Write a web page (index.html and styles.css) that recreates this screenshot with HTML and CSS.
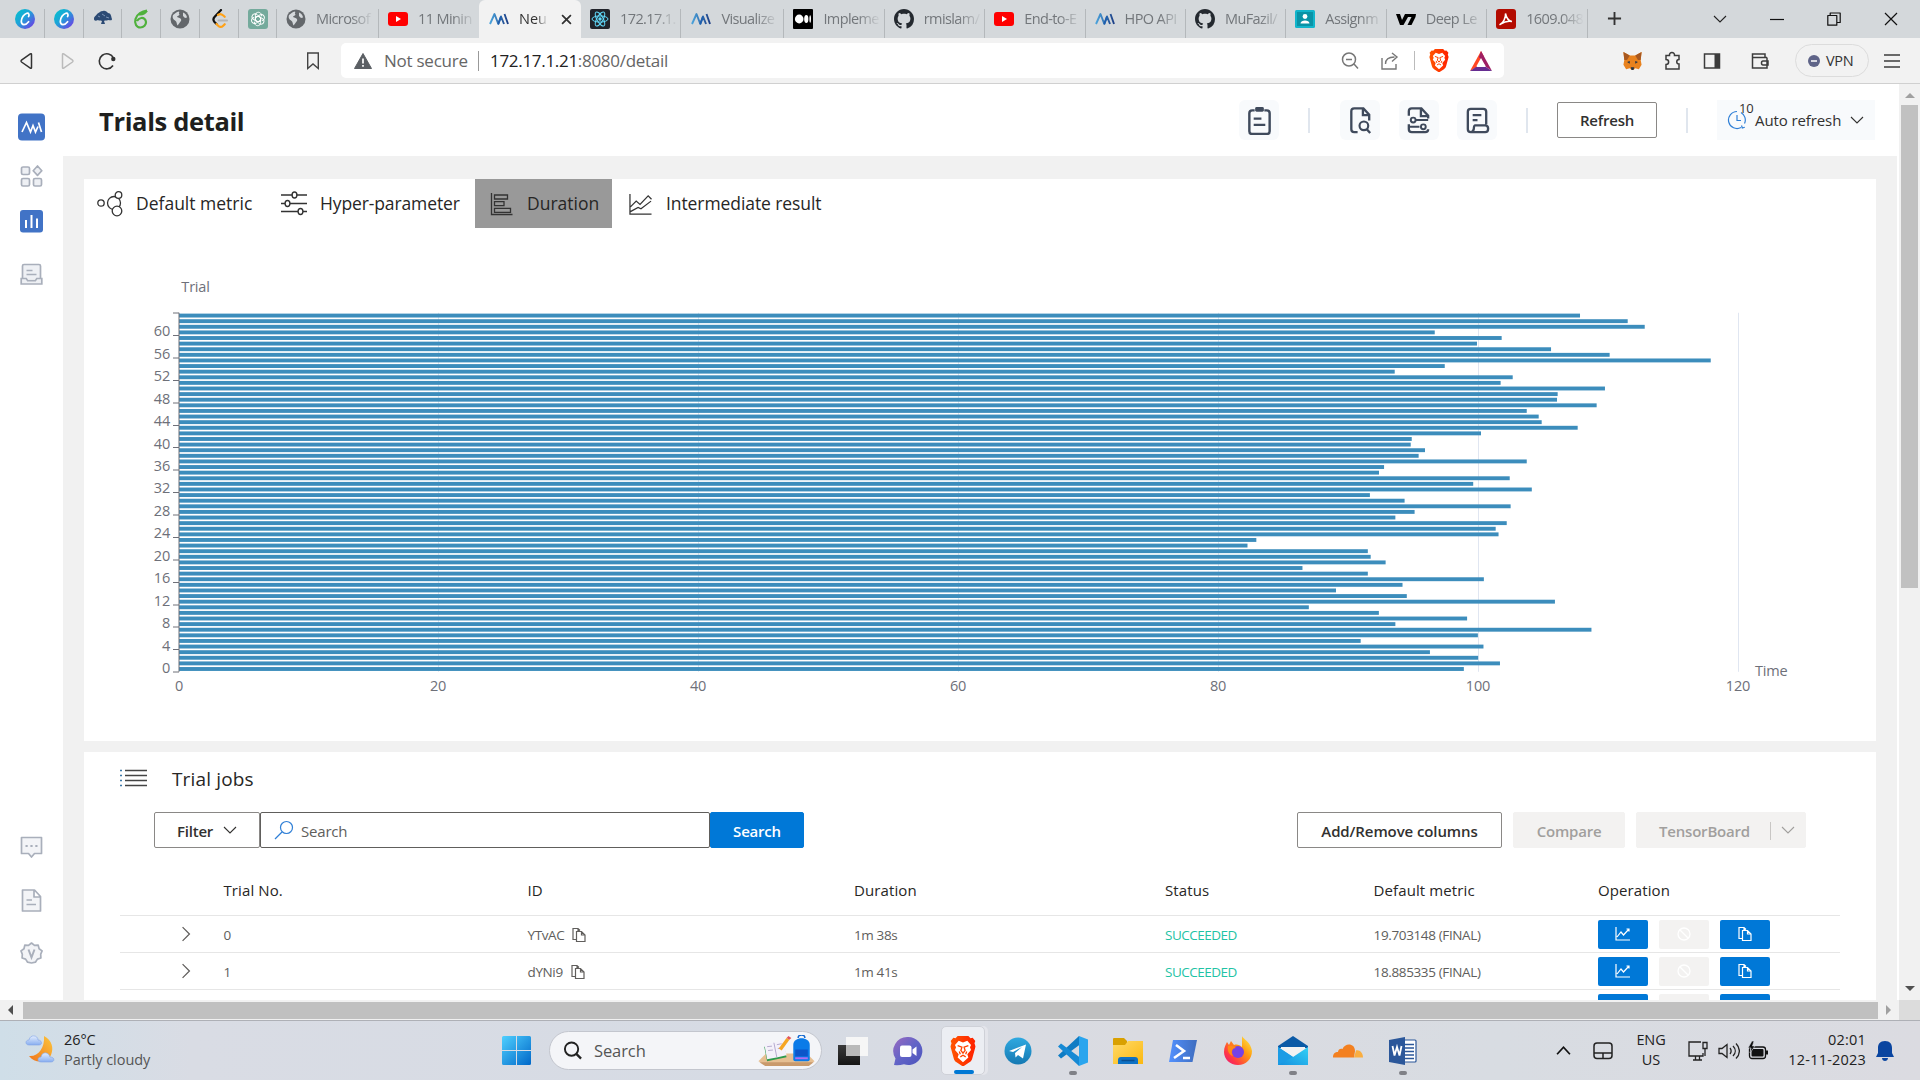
FILE: index.html
```html
<!DOCTYPE html>
<html lang="en">
<head>
<meta charset="utf-8">
<title>Neural Network Intelligence</title>
<link rel="stylesheet" href="styles.css">
</head>
<body>
<svg class="defs" aria-hidden="true">
  <defs>
    <linearGradient id="gCanva" x1="0" y1="0" x2="1" y2="1"><stop offset="0" stop-color="#00c4cc"/><stop offset=".45" stop-color="#1fa3d8"/><stop offset="1" stop-color="#7d2ae8"/></linearGradient>
    <linearGradient id="gNni" x1="0" y1="0" x2="1" y2="0"><stop offset="0" stop-color="#4aa3dc"/><stop offset="1" stop-color="#1d3f86"/></linearGradient>
    <linearGradient id="gWin" x1="0" y1="0" x2="1" y2="1"><stop offset="0" stop-color="#4fd0ff"/><stop offset="1" stop-color="#0067c8"/></linearGradient>
    <linearGradient id="gBrave" x1="0" y1="0" x2="1" y2="0"><stop offset="0" stop-color="#ff5601"/><stop offset="1" stop-color="#ff2000"/></linearGradient>
    <linearGradient id="gChat" x1="0" y1="0" x2="1" y2="1"><stop offset="0" stop-color="#9a6ac0"/><stop offset=".5" stop-color="#6264c7"/><stop offset="1" stop-color="#4b53bc"/></linearGradient>
    <linearGradient id="gTg" x1="0" y1="0" x2="0" y2="1"><stop offset="0" stop-color="#2fa9e0"/><stop offset="1" stop-color="#1579b3"/></linearGradient>
    <linearGradient id="gFold" x1="0" y1="0" x2="1" y2="1"><stop offset="0" stop-color="#ffda69"/><stop offset="1" stop-color="#fbb810"/></linearGradient>
    <linearGradient id="gFire" x1="1" y1="0" x2="0" y2="1"><stop offset="0" stop-color="#fff44f"/><stop offset=".4" stop-color="#ff980e"/><stop offset=".75" stop-color="#ff3647"/><stop offset="1" stop-color="#e31587"/></linearGradient>
    <linearGradient id="gMail" x1="1" y1="0" x2="0" y2="1"><stop offset="0" stop-color="#35d0f5"/><stop offset="1" stop-color="#1490df"/></linearGradient>
    <linearGradient id="gPs" x1="0" y1="0" x2="1" y2="0"><stop offset="0" stop-color="#5391fe"/><stop offset="1" stop-color="#3e6dbf"/></linearGradient>
    <linearGradient id="gMoon" x1="1" y1="0" x2="0" y2="1"><stop offset="0" stop-color="#fcc63c"/><stop offset="1" stop-color="#f0741b"/></linearGradient>
    <linearGradient id="gCloud" x1="0" y1="0" x2="0" y2="1"><stop offset="0" stop-color="#e3edfd"/><stop offset="1" stop-color="#88aef0"/></linearGradient>
    <linearGradient id="gDark" x1="0" y1="0" x2="0" y2="1"><stop offset="0" stop-color="#3a3a3a"/><stop offset="1" stop-color="#151515"/></linearGradient>
    <symbol id="canva" viewBox="0 0 20 20"><circle cx="10" cy="10" r="10" fill="url(#gCanva)"/><path d="M13.600 7.500c1-1.700.2-3.700-1.800-3.200C9 5 6.300 9 6.300 12.300c0 4.500 4.500 4.200 7.300.4" fill="none" stroke="#fff" stroke-width="1.700" stroke-linecap="round"/></symbol>
    <symbol id="tree" viewBox="0 0 20 20"><path d="M1 10c0-3 2-3 3-5 2-1 3-3 6-3 2-1 4 1 5 2 3 0 3 3 4 6 0 2-2 1-4 1-1 1-3 0-4 1l1 3H8l1-3c-2-1-3 0-4-1-2 1-4 1-4-1z" fill="#2b4a74"/><path d="M5 7l2 1M9 5l3 2M13 8l3 1" stroke="#7b93b5" fill="none"/></symbol>
    <symbol id="leafc" viewBox="0 0 20 20"><path d="M16 1.500C11 2 6 5 4.500 10c-1.300 4.500 1 8.500 4.800 8.500 3.500 0 5.900-2.700 5.700-5.500-.2-2.600-2.300-4.300-4.700-4-2 .3-3.500 1.500-4.300 3M8 5.200c2.800.8 5.500-.5 8-3.700" fill="none" stroke="#4fb13c" stroke-width="2.200"/></symbol>
    <symbol id="globe" viewBox="0 0 20 20"><circle cx="10" cy="10" r="9.500" fill="#63676b"/><path d="M3 6c2-1 3-3 6-3.500 1 1-1 2 .5 3 0 1.500-2.500 1-2.500 2.500l2.500 1c1.500.5 2 1.500 1.500 3-1 .8-1.500 2.500-3.500 4.500-1-1.500-.5-4-2.500-5C3.500 10.500 2 9 3 6zm10-2.500c2 .5 4 3 4 5l-2 .5-2-2z" fill="#d4d8db"/></symbol>
    <symbol id="leet" viewBox="0 0 20 20"><path d="M11 1L4.500 8c-1.300 1.500-1.300 3.500 0 5l2 2" fill="none" stroke="#111" stroke-width="2.200" stroke-linecap="round"/><path d="M6.500 15l1.700 1.700c1.500 1.500 3.500 1.500 5 0l1.500-1.500M8 5.800c1.500-1 3.600-.8 5 .5l1.700 1.500" fill="none" stroke="#ffa116" stroke-width="2.200" stroke-linecap="round"/><path d="M8.500 11.500H17" stroke="#b3b3b3" stroke-width="2" stroke-linecap="round"/></symbol>
    <symbol id="gpt" viewBox="0 0 20 20"><rect width="20" height="20" rx="3" fill="#74aa9c"/><g fill="none" stroke="#fff"><path id="petal" d="M7.400 11.300V6.200c0-3 4-4 5.600-1.500.5.900.6 1.700.3 2.600M7.400 8.500l2.600-1.500 2.600 1.500"/><use href="#petal" transform="rotate(60 10 10)"/><use href="#petal" transform="rotate(120 10 10)"/><use href="#petal" transform="rotate(180 10 10)"/><use href="#petal" transform="rotate(240 10 10)"/><use href="#petal" transform="rotate(300 10 10)"/></g></symbol>
    <symbol id="yt" viewBox="0 0 20 20"><rect y="3" width="20" height="14" rx="3" fill="#f00"/><path d="M8 7l5 3-5 3z" fill="#fff"/></symbol>
    <symbol id="nni" viewBox="0 0 20 20"><path d="M1 15L5.500 5l3.800 10L12 7.500l3 7.500M15.500 5l3.500 10" fill="none" stroke="url(#gNni)" stroke-width="1.900" stroke-linejoin="round"/><path d="M9.300 15l2.700-7.500" stroke="#1f5fae" stroke-width="1.900"/></symbol>
    <symbol id="react" viewBox="0 0 20 20"><rect width="20" height="20" rx="2" fill="#20232a"/><g fill="none" stroke="#61dafb"><ellipse cx="10" cy="10" rx="8" ry="3.100"/><ellipse cx="10" cy="10" rx="8" ry="3.100" transform="rotate(60 10 10)"/><ellipse cx="10" cy="10" rx="8" ry="3.100" transform="rotate(120 10 10)"/></g><circle cx="10" cy="10" r="1.700" fill="#61dafb"/></symbol>
    <symbol id="medium" viewBox="0 0 20 20"><rect width="20" height="20" rx="1" /><ellipse cx="6.200" cy="10" rx="4.300" ry="4.400" fill="#fff"/><ellipse cx="13.300" cy="10" rx="2.100" ry="4.100" fill="#fff"/><ellipse cx="17.200" cy="10" rx=".8" ry="3.700" fill="#fff"/></symbol>
    <symbol id="github" viewBox="0 0 16 16"><path fill="#24292f" d="M8 0C3.580 0 0 3.580 0 8c0 3.540 2.290 6.530 5.470 7.590.4.070.55-.17.55-.38 0-.19-.01-.82-.01-1.490-2.010.37-2.530-.49-2.690-.94-.09-.23-.48-.94-.82-1.130-.28-.15-.68-.52-.01-.53.63-.01 1.080.58 1.230.82.72 1.210 1.870.87 2.330.66.07-.52.28-.87.51-1.070-1.780-.2-3.640-.89-3.640-3.950 0-.87.31-1.590.82-2.150-.08-.2-.36-1.020.08-2.120 0 0 .67-.21 2.200.82.640-.18 1.320-.27 2-.27s1.360.09 2 .27c1.530-1.040 2.200-.82 2.200-.82.44 1.100.16 1.920.08 2.120.51.56.82 1.270.82 2.150 0 3.070-1.870 3.750-3.650 3.950.29.25.54.73.54 1.480 0 1.070-.01 1.930-.01 2.200 0 .21.15.46.55.38A8.010 8.010 0 0016 8c0-4.420-3.580-8-8-8z"/></symbol>
    <symbol id="classroom" viewBox="0 0 20 20"><rect y="1" width="20" height="18" rx="1.500" fill="#12b5cb"/><rect x="2" y="3" width="16" height="14" fill="#0a93a6"/><circle cx="10" cy="7.500" r="2.400" fill="#fff"/><path d="M5.500 14.500c0-4 9-4 9 0z" fill="#fff"/></symbol>
    <symbol id="v7" viewBox="0 0 20 20"><path d="M0 5h4l2 6 3-6h11l-.5 3-4 8h-4l4-8h-3.500l-4.500 8H4z"/></symbol>
    <symbol id="pdf" viewBox="0 0 20 20"><rect width="20" height="20" rx="3" fill="#b30b00"/><path d="M4 15.500c3-1 6-7 5.500-11 1 5 3 7.500 6.500 8-4-.7-7.500 0-11 2.500" fill="none" stroke="#fff" stroke-width="1.500" stroke-linecap="round"/></symbol>
    <symbol id="brave" viewBox="0 0 24 28"><path d="M12 0h5l2 2 2-.3 2.500 3-.8 2 1 3-3 11c-.5 2-1.500 3-2.700 3.800L12.800 28h-1.600L6 24.500C4.800 23.700 3.800 22.700 3.300 20.700L.3 9.700l1-3-.8-2 2.500-3 2 .3 2-2z" fill="url(#gBrave)"/><path d="M12 6l4-1.500 3.500 4-1 2 1 2.500-3.500 4 1 3-5 4.500L7 20l1-3-3.500-4 1-2.500-1-2 3.500-4z" fill="#fff"/><path d="M7 9l4 1.500-1 3L12 16l2-2.500-1-3L17 9M8.500 14.500l1 2.500M15.500 14.500l-1 2.500M9.500 19.500L12 18l2.500 1.500" fill="none" stroke="#ff4200" stroke-width="1.200"/></symbol>
    <symbol id="chev" viewBox="0 0 14 14"><path d="M1 4l6 6 6-6" fill="none" stroke="currentColor" stroke-width="1.100"/></symbol>
    <symbol id="copy" viewBox="0 0 16 16"><path d="M5 12.500H2v-11h5l2 2M7 1.500v3M5.500 4.500h5l3.500 3.500v6.500H5.500zM10.500 4.500V8H14" fill="none" stroke="currentColor" stroke-width="1.200"/></symbol>
    <symbol id="line" viewBox="0 0 16 16"><path d="M1 1v13h14M2 11l4-5 2.500 3 5.500-6M11.500 3H14v2.500" fill="none" stroke="currentColor" stroke-width="1.200"/></symbol>
    <symbol id="ban" viewBox="0 0 16 16"><circle cx="8" cy="8" r="6" fill="none" stroke="#fff" stroke-width="1.300"/><path d="M4 4l8 8" stroke="#fff" stroke-width="1.300"/></symbol>
  </defs>
</svg>

<div class="tabstrip">
  <div class="tab t1"><svg class="fav"><use href="#canva"/></svg></div>
  <div class="tab t2"><svg class="fav"><use href="#canva"/></svg></div>
  <div class="tab t3"><svg class="fav"><use href="#tree"/></svg></div>
  <div class="tab t4"><svg class="fav"><use href="#leafc"/></svg></div>
  <div class="tab t5"><svg class="fav"><use href="#globe"/></svg></div>
  <div class="tab t6"><svg class="fav"><use href="#leet"/></svg></div>
  <div class="tab t7"><svg class="fav"><use href="#gpt"/></svg></div>
  <div class="tab wide w1"><svg class="fav"><use href="#globe"/></svg><span>Microsof</span></div>
  <div class="tab wide w2"><svg class="fav"><use href="#yt"/></svg><span>11 Minin</span></div>
  <div class="tab wide active"><svg class="fav"><use href="#nni"/></svg><span>Neu</span><svg class="close" viewBox="0 0 10 10"><path d="M1 1l8 8M9 1L1 9" stroke="#333" stroke-width="1.600"/></svg></div>
  <div class="tab wide"><svg class="fav"><use href="#react"/></svg><span>172.17.1.</span></div>
  <div class="tab wide w3"><svg class="fav"><use href="#nni"/></svg><span>Visualize</span></div>
  <div class="tab wide"><svg class="fav"><use href="#medium"/></svg><span>Impleme</span></div>
  <div class="tab wide"><svg class="fav"><use href="#github"/></svg><span>rmislam/</span></div>
  <div class="tab wide"><svg class="fav"><use href="#yt"/></svg><span>End-to-E</span></div>
  <div class="tab wide"><svg class="fav"><use href="#nni"/></svg><span>HPO API</span></div>
  <div class="tab wide"><svg class="fav"><use href="#github"/></svg><span>MuFazil/</span></div>
  <div class="tab wide"><svg class="fav"><use href="#classroom"/></svg><span>Assignm</span></div>
  <div class="tab wide"><svg class="fav"><use href="#v7"/></svg><span>Deep Le</span></div>
  <div class="tab wide"><svg class="fav"><use href="#pdf"/></svg><span>1609.048</span></div>
  <svg class="newtab" viewBox="0 0 16 16"><path d="M8 1v14M1 8h14" stroke="#333" stroke-width="2"/></svg>
  <div class="wincontrols">
    <svg viewBox="0 0 14 14"><use href="#chev"/></svg>
    <svg viewBox="0 0 14 14"><path d="M0 7.500h14" stroke="#111" stroke-width="1.200"/></svg>
    <svg viewBox="0 0 14 14"><path d="M.8 3.500h9v9.700h-9zM3.200 3.200V1h10v9.500h-3" fill="none" stroke="#111" stroke-width="1.200" stroke-linejoin="round"/></svg>
    <svg viewBox="0 0 14 14"><path d="M1 1l12 12M13 1L1 13" stroke="#111" stroke-width="1.200"/></svg>
  </div>
</div>

<div class="toolbar">
  <svg class="tb" viewBox="0 0 20 20"><path d="M14.500 3.500v13c0 .8-.6 1-1.200.6L4.500 11c-.6-.5-.6-1.300 0-1.800l8.800-6.300c.6-.4 1.200-.2 1.200.6z" fill="none" stroke="#333" stroke-width="1.500"/></svg>
  <svg class="tb" viewBox="0 0 20 20"><path d="M5.500 3.500v13c0 .8.6 1 1.200.6L15.500 11c.6-.5.6-1.300 0-1.800L6.700 2.900c-.6-.4-1.200-.2-1.200.6z" fill="none" stroke="#bbb" stroke-width="1.500"/></svg>
  <svg class="tb" viewBox="0 0 20 20"><path d="M16 14.500A7.500 7.500 0 1 1 16.500 7" fill="none" stroke="#333" stroke-width="1.600"/><circle cx="16.300" cy="8" r="2.200" fill="#333"/></svg>
  <svg class="tb mark" viewBox="0 0 20 20"><path d="M4.700 2h10.600v15.500L10 13l-5.300 4.500z" fill="none" stroke="#444" stroke-width="1.400"/></svg>
  <div class="url">
    <svg class="warn" viewBox="0 0 18 16"><path d="M9 .5l8.500 15H.5z" fill="#5b5f64" stroke="#5b5f64" stroke-linejoin="round"/><path d="M9 5.500v5M9 12v1.800" stroke="#fff" stroke-width="1.700"/></svg>
    <span class="ns">Not secure</span><i class="vbar"></i><span class="addr"><b>172.17.1.21</b>:8080/detail</span>
    <div class="urlicons">
      <svg viewBox="0 0 20 20"><circle cx="9" cy="8.500" r="6.500" fill="none" stroke="#777" stroke-width="1.500"/><path d="M6 8.500h6M14 13l4 4.500" stroke="#777" stroke-width="1.500"/></svg>
      <svg viewBox="0 0 20 20"><path d="M2 7v11h14v-5M5.500 13c0-5 3-7 9-7M12 2l5 4-5 4.500" fill="none" stroke="#777" stroke-width="1.400"/></svg>
      <i class="vbar2"></i>
      <svg class="br"><use href="#brave"/></svg>
      <svg class="bat" viewBox="0 0 22 20"><path d="M11 0l3 5.500-8 11L0 20z" fill="#ff4724"/><path d="M11 0l11 20-6-4-7-10z" fill="#9e1f63"/><path d="M0 20l6-4h10l6 4z" fill="#662d91"/><path d="M11 7l4.500 8h-9z" fill="#fff"/></svg>
    </div>
  </div>
  <svg class="tb fox" viewBox="0 0 22 22"><path d="M1 1l7 4h6l7-4-1 9 1 5-3 5-4-1-2 2h-2l-2-2-4 1-3-5 1-5z" fill="#e8821e"/><path d="M1 1l7 4-3 5H2zM21 1l-7 4 3 5h3z" fill="#a8581f"/><path d="M8 11l-3 1 3 2zM14 11l3 1-3 2zM9 18h4l-1 3h-2z" fill="#233447"/></svg>
  <svg class="tb" viewBox="0 0 20 20"><path d="M4 4.500h3.500c-.6-4 5.500-4 5 0H17v4c-3 0-3 4.500 0 4.500V18H4v-4.500c3.500 0 3.500-5 0-5z" fill="none" stroke="#3c3c3c" stroke-width="1.500"/></svg>
  <svg class="tb" viewBox="0 0 20 20"><path d="M2.500 3h15v14h-15z" fill="none" stroke="#3c3c3c" stroke-width="1.500"/><path d="M12.500 3h5v14h-5z" fill="#3c3c3c"/></svg>
  <svg class="tb wal" viewBox="0 0 20 20"><path d="M17 6.500V17H2.500V3H15v3.500M2.500 6.500H17M18 10h-5c-2 0-2 4 0 4h5z" fill="none" stroke="#3c3c3c" stroke-width="1.500"/></svg>
  <div class="vpn"><svg viewBox="0 0 12 12"><circle cx="6" cy="6" r="6" fill="#5f6488"/><path d="M3 6h6" stroke="#fff" stroke-width="1.500"/></svg>VPN</div>
  <svg class="tb menu" viewBox="0 0 20 20"><path d="M2 4h16M2 10h16M2 16h16" stroke="#3c3c3c" stroke-width="1.400"/></svg>
</div>

<div class="page">
  <nav class="side">
    <svg class="s1" viewBox="0 0 27 27"><rect width="27" height="27" rx="4" fill="#4173c6"/><path d="M4 18.500L8.500 9l4 9.500 2.500-6.500 2.500 6.500L20 13M20.500 9l3 9.500" fill="none" stroke="#fff" stroke-width="1.700"/></svg>
    <svg class="s2" viewBox="0 0 23 23"><g fill="#eef0f4" stroke="#a9afbb" stroke-width="1.700"><rect x="1.500" y="2" width="8" height="7.500" rx="1.500"/><path d="M17.500 1l4.300 4.700-4.300 4.700-4.300-4.700z" stroke-linejoin="round"/><rect x="1.500" y="13.500" width="8" height="7.500" rx="1.500"/><rect x="13.500" y="13.500" width="8" height="7.500" rx="1.500"/></g></svg>
    <svg class="s3" viewBox="0 0 23 23"><rect width="23" height="22.500" rx="3" fill="#4173c6"/><path d="M6 10v8M11.500 5v13M17 8.500V18" stroke="#fff" stroke-width="2"/></svg>
    <svg class="s4" viewBox="0 0 23 23"><g fill="#eef0f4" stroke="#a9afbb" stroke-width="1.700"><path d="M2.500 16V3c0-1 .5-1.500 1.500-1.500h15c1 0 1.500.5 1.500 1.500v13"/><path d="M1.200 15.500h5l1.500 2.200h7.600l1.500-2.200h5V21H1.200z"/><path d="M6.500 7.500h6M6.500 11.500h10"/></g></svg>
    <svg class="s5" viewBox="0 0 23 23"><path d="M1.500 1.500h20v16h-7l-3 3.500-3-3.500h-7z" fill="#f3f4f7" stroke="#a9afbb" stroke-width="1.700" stroke-linejoin="round"/><path d="M5.500 10h2.200M10.400 10h2.200M15.300 10h2.200" stroke="#a9afbb" stroke-width="2"/></svg>
    <svg class="s6" viewBox="0 0 23 23"><path d="M2.500 1h12l6 6.500V22h-18zM14 1.500V8h6" fill="#f3f4f7" stroke="#a9afbb" stroke-width="1.700" stroke-linejoin="round"/><path d="M6.500 11h5.500M6.500 15.500h9.500" stroke="#a9afbb" stroke-width="1.600"/></svg>
    <svg class="s7" viewBox="0 0 23 23"><path d="M11.500 1l3 2.300 3.700-.2.900 3.600 3 2.200-1.400 3.400.2 3.700-3.500 1.100-2 3.100-3.900.800-3.900-.8-2-3.100-3.500-1.100.2-3.700L1 8.900l3-2.200.8-3.600 3.700.2z" fill="#f3f4f7" stroke="#a9afbb" stroke-width="1.700" stroke-linejoin="round"/><path d="M8.500 7.500l3 8 3-8" fill="none" stroke="#a9afbb" stroke-width="2"/></svg>
  </nav>
  <main class="main">
    <header class="head">
      <h1>Trials detail</h1>
      <div class="tools">
        <div class="ibox"><svg viewBox="0 0 30 30"><path d="M10 4.500H7.500c-2 0-3 1-3 3V26c0 2 1 3 3 3h15c2 0 3-1 3-3V7.500c0-2-1-3-3-3H20" fill="none" stroke="#3f4a5c" stroke-width="2.500"/><rect x="10.500" y="1" width="9" height="5" rx="1.500" fill="#3f4a5c"/><path d="M9 13h8M9 19.500h12" stroke="#3f4a5c" stroke-width="2.300"/></svg></div>
        <i class="hsep a"></i>
        <div class="ibox b"><svg viewBox="0 0 30 30"><path d="M12 27H8.500c-2 0-3-1-3-3V5.500c0-2 1-3 3-3H18l6 6.500v6M17.500 3v6.500H24" fill="none" stroke="#3f4a5c" stroke-width="2.400"/><circle cx="18.500" cy="20.500" r="4.500" fill="none" stroke="#3f4a5c" stroke-width="2.200"/><path d="M21.500 24l3.500 4" stroke="#3f4a5c" stroke-width="2.400"/></svg></div>
        <div class="ibox c"><svg viewBox="0 0 30 30"><path d="M5 10V5.500c0-2 1-3 3-3h10L25 10v3M17.500 3v7.500H25M5 19v5c0 2 1 3 3 3h14c2 0 3-1 3-3" fill="none" stroke="#3f4a5c" stroke-width="2.400"/><path d="M12 14.500h13M5 21.500h11" stroke="#3f4a5c" stroke-width="2.200"/><circle cx="9.500" cy="14.500" r="2.500" fill="none" stroke="#3f4a5c" stroke-width="2"/><circle cx="20" cy="21.500" r="2.500" fill="none" stroke="#3f4a5c" stroke-width="2"/></svg></div>
        <div class="ibox d"><svg viewBox="0 0 30 30"><path d="M24 19V6c0-2-1-3-3-3H8C6 3 5 4 5 6v18c0 2 1 3 3 3h15c4 0 4-7 0-7H12.500c-1.500 0-1 2.500-1.500 4.500-.5 1.500-1.500 2.500-3 2.500" fill="none" stroke="#3f4a5c" stroke-width="2.400"/><path d="M10 9.500h9M10 14.500h5" stroke="#3f4a5c" stroke-width="2.300"/></svg></div>
        <i class="hsep e"></i>
        <button class="btn refresh">Refresh</button>
        <i class="hsep f"></i>
        <div class="auto"><svg class="clock" viewBox="0 0 20 20"><path d="M10 1.500a8.500 8.500 0 1 0 4 16M14 2.500a8.500 8.500 0 0 1 3.500 11M10 5v5.500h4M14.500 15.500l.8 2.500 2.500-.8" fill="none" stroke="#2f7fd6" stroke-width="1.200"/></svg><sup>10</sup><span>Auto refresh</span><svg class="cv"><use href="#chev"/></svg></div>
      </div>
    </header>
    <section class="card chartcard">
      <div class="pivot">
        <div class="pv p1"><svg viewBox="0 0 26 26"><g fill="none" stroke="#333" stroke-width="1.300"><circle cx="4" cy="12" r="3.200"/><circle cx="17" cy="12" r="6.500"/><circle cx="21.500" cy="4" r="3.300" fill="#fff"/><circle cx="20" cy="20" r="4.800" fill="#fff"/></g></svg><span>Default metric</span></div>
        <div class="pv p2"><svg viewBox="0 0 26 26"><g fill="none" stroke="#333" stroke-width="1.400"><path d="M0 4h11M16 4h10M0 12.500h4M9 12.500h17M0 20.500h17M22 20.500h4"/><ellipse cx="13.500" cy="4" rx="2.400" ry="3"/><ellipse cx="6.500" cy="12.500" rx="2.400" ry="3"/><ellipse cx="19.500" cy="20.500" rx="2.400" ry="3"/></g></svg><span>Hyper-parameter</span></div>
        <div class="pv p3"><svg viewBox="0 0 22 24"><path d="M1 1v21.500h21M4 3h13v4H4zM4 9.700h9.500v4H4zM4 16.300h16v4H4z" fill="none" stroke="#333" stroke-width="1.300"/></svg><span>Duration</span></div>
        <div class="pv p4"><svg viewBox="0 0 24 24"><path d="M1 1.500v21h22.500M1.500 15l6-6 4 3.500L20 3.500l3.500 3.500M1.500 20l8-4.500 3 1.500L23 9" fill="none" stroke="#333" stroke-width="1.300"/></svg><span>Intermediate result</span></div>
      </div>
      <svg class="chart" id="chart" viewBox="84 228 1792 513"></svg>
    </section>
    <section class="card jobs">
      <div class="jobtitle"><svg viewBox="0 0 27 18"><path d="M5 1.500h22M5 6.500h22M5 11.500h22M5 16.500h22" stroke="#444" stroke-width="1.500"/><path d="M0 1.500h2M0 6.500h2M0 11.500h2M0 16.500h2" stroke="#3c78a8" stroke-width="1.500"/></svg><h2>Trial jobs</h2></div>
      <div class="actions">
        <button class="btn filter">Filter<svg><use href="#chev"/></svg></button>
        <div class="searchbox"><svg viewBox="0 0 20 20"><circle cx="12.500" cy="7.500" r="6" fill="none" stroke="#2f7fd6" stroke-width="1.200"/><path d="M8 12L1 19" stroke="#2f7fd6" stroke-width="1.200"/></svg>Search</div>
        <button class="btn primary">Search</button>
        <button class="btn addrem">Add/Remove columns</button>
        <button class="btn dis cmp">Compare</button>
        <button class="btn dis tens"><span>TensorBoard</span><i></i><svg><use href="#chev"/></svg></button>
      </div>
      <div class="row hd"><span></span><span>Trial No.</span><span>ID</span><span>Duration</span><span>Status</span><span>Default metric</span><span>Operation</span></div>
      <div class="row"><svg class="exp"><use href="#chev"/></svg><span>0</span><span class="id">YTvAC<svg><use href="#copy"/></svg></span><span>1m 38s</span><span class="ok">SUCCEEDED</span><span>19.703148 (FINAL)</span><div class="ops"><b><svg><use href="#line"/></svg></b><b class="off"><svg><use href="#ban"/></svg></b><b><svg><use href="#copy"/></svg></b></div></div>
      <div class="row"><svg class="exp"><use href="#chev"/></svg><span>1</span><span class="id">dYNi9<svg><use href="#copy"/></svg></span><span>1m 41s</span><span class="ok">SUCCEEDED</span><span>18.885335 (FINAL)</span><div class="ops"><b><svg><use href="#line"/></svg></b><b class="off"><svg><use href="#ban"/></svg></b><b><svg><use href="#copy"/></svg></b></div></div>
      <div class="row"><span></span><span></span><span></span><span></span><span></span><span></span><div class="ops"><b></b><b class="off"></b><b></b></div></div>
    </section>
  </main>
  <div class="vscroll"><i class="up"></i><div class="vthumb"></div><i class="down"></i></div>
</div>
<div class="hscroll"><i class="left"></i><div class="hthumb"></div><i class="right"></i><div class="corner"></div></div>

<footer class="taskbar">
  <svg class="weather" viewBox="0 0 30 30"><path d="M19 2c8 4 10 12 7 19-4 8-16 9-22 1 9 1 16-8 15-20z" fill="url(#gMoon)"/><path d="M4 11c-4 0-4-5 0-5 1-6 9-5 9 0 4 0 5 5 1 5z" fill="url(#gCloud)" stroke="#7fa3e6" stroke-width=".6"/><path d="M16 28c-4 0-4-5 0-5 1-6 8-5 9 0 5 0 5 5 1 5z" fill="url(#gCloud)" stroke="#7fa3e6" stroke-width=".6"/></svg>
  <div class="wtext"><span>26°C</span><span class="dim">Partly cloudy</span></div>
  <svg class="start" viewBox="0 0 29 29"><path d="M0 1.500Q0 0 1.500 0H14v14H0zM15 0h12.500Q29 0 29 1.500V14H15zM0 15h14v14H1.500Q0 29 0 27.500zM15 15h14v12.500Q29 29 27.500 29H15z" fill="url(#gWin)"/></svg>
  <div class="tsearch"><svg viewBox="0 0 20 20"><circle cx="9" cy="8.500" r="7" fill="none" stroke="#222" stroke-width="2"/><path d="M14 13.500l5 5" stroke="#222" stroke-width="2.400"/></svg><span>Search</span>
    <svg class="illus" viewBox="0 0 58 32"><path d="M0 27l8-8h42l8 8-6 4H7z" fill="#e6bf92"/><path d="M1 28h56l-5 4H7z" fill="#c99a6c"/><path d="M6 12l20-3 3 14-20 4z" fill="#2e9a4c"/><path d="M6 9l10-1 10-3 3 16-9 2-11 2z" fill="#f4f1fa"/><path d="M16 8l3 15M9 12l5-.5M10 16l5-.5M19 10l5-1M20 14l5-1" stroke="#b4a8cc"/><path d="M21 14l8-11 3 2-8 11z" fill="#f6a623"/><path d="M29 3l2-2 3 2-2 2z" fill="#e3555c"/><path d="M36 10c0-9 17-9 17 0v15q0 2-2 2H38q-2 0-2-2z" fill="#0b7be8"/><path d="M41 3c0-4 7-4 7 0" fill="none" stroke="#1268d0" stroke-width="1.500"/><path d="M38 15h13v7H38z" fill="#0c55c9"/><path d="M38 23h13v2H38z" fill="#b06cf0"/></svg>
  </div>
  <div class="apps">
    <div><svg viewBox="0 0 30 30"><path d="M0 9h22v20H0z" fill="url(#gDark)"/><path d="M8 1h22v19H8z" fill="#f6f6f6"/><path d="M8 9h14v11H8z" fill="#b9b9b9"/></svg></div>
    <div><svg viewBox="0 0 30 30"><path d="M15 1a14 14 0 1 1-4 27.300Q6 29.500 1 29l1.500-6.500A14 14 0 0 1 15 1z" fill="url(#gChat)"/><rect x="7" y="9.500" width="11.500" height="11.500" rx="2" fill="#fff"/><path d="M19.500 13.500l4-3v9.500l-4-3z" fill="#fff"/></svg></div>
    <div class="tile"><svg viewBox="0 0 24 28"><use href="#brave"/></svg><i class="on"></i></div>
    <div><svg viewBox="0 0 30 30"><circle cx="15" cy="15" r="13.500" fill="url(#gTg)"/><path d="M6 15l17-6.500-3 14-5-3.500-2.500 2.500-.5-4.500 7-6-9 5z" fill="#fff"/></svg></div>
    <div><svg viewBox="0 0 30 30"><path d="M21 0L0 19.500l3 3L22 8.500z" fill="#0f7cc4"/><path d="M21 30L0 10.500l3-3L22 21.500z" fill="#1689d4"/><path d="M21 0l9 3.500v23L21 30z" fill="#2aa5ee"/></svg><i></i></div>
    <div><svg viewBox="0 0 30 30"><path d="M0 3q0-1 1-1h10l3 3v6H0z" fill="#d9a000"/><path d="M0 9h12l3-4h15v23H0z" fill="url(#gFold)"/><path d="M5 28v-4q0-3 3-3h14q3 0 3 3v4z" fill="#0f72c4"/><path d="M8.500 24.500h13" stroke="#0a4f90" stroke-width="1.500"/></svg></div>
    <div><svg viewBox="0 0 30 30"><path d="M5 4h24l-4.500 22H1z" fill="url(#gPs)"/><path d="M8 9l8 6-10 7M15 22h7" fill="none" stroke="#fff" stroke-width="2.600"/></svg></div>
    <div><svg viewBox="0 0 30 30"><path d="M19 0c1 3 9 6 10 15 0 8-6 14-14 14S1 23 1 16c0-5 2-8 3-10l2 3 2-4 3 4c3-1 6 0 8 2z" fill="url(#gFire)"/><circle cx="15" cy="16" r="6" fill="#7542e5"/><path d="M5 10c3-1 5 0 8 2-5 0-5 5-3 8-4-1-6-6-5-10z" fill="#ff8a16"/></svg></div>
    <div><svg viewBox="0 0 30 30"><path d="M0 10L15 0l15 10v2H0z" fill="#0b5aa6"/><path d="M3 11h24v10H3z" fill="#f2f2f2"/><path d="M0 11l15 10L30 11v18H0z" fill="url(#gMail)"/><path d="M0 11l15 10-15 8z" fill="#1b9ce5"/></svg><i></i></div>
    <div><svg viewBox="0 0 30 30"><path d="M0 21.500c0-4 2-5.500 5-5.500 0-3 3-4 4.500-3C12 6.500 22 7 22 15l-1 6.500z" fill="#f38020"/><path d="M21 21.500l2-7c4-1 7 3 7 7z" fill="#faae40"/></svg></div>
    <div><svg viewBox="0 0 30 30"><path d="M14 4h13q1 0 1 1v20q0 1-1 1H14z" fill="#fff" stroke="#2b579a" stroke-width="1.200"/><path d="M17 8.500h9M17 12h9M17 15.500h9M17 19h9M17 22.500h9" stroke="#2b579a" stroke-width="1.500"/><path d="M1 4l16-3v28L1 26z" fill="#2b579a"/><path d="M4.500 10l2 9.500L9 11l2.500 8.500 2-9.500" fill="none" stroke="#fff" stroke-width="1.800"/></svg><i></i></div>
  </div>
  <div class="tray">
    <svg class="y1" viewBox="0 0 14 14"><path d="M1 10.500L7 4l6 6.500" fill="none" stroke="#111" stroke-width="1.600"/></svg>
    <svg class="y2" viewBox="0 0 20 18"><rect x="1" y="1" width="18" height="15.500" rx="3" fill="none" stroke="#222" stroke-width="1.500"/><path d="M1 11h18M10 11v5" stroke="#222" stroke-width="1.500"/></svg>
    <div class="lang"><span>ENG</span><span>US</span></div>
    <svg class="y3" viewBox="0 0 20 20"><path d="M13 1H1v14h14v-3M5 19h9M7.500 15v4M11.500 15v4M15 1.500h4v6h-4zM17 8v7" fill="none" stroke="#222" stroke-width="1.300"/></svg>
    <svg class="y4" viewBox="0 0 22 20"><path d="M1 7.500h3l5-4v13l-5-4H1zM12 7c1.500 2 1.500 4 0 6M15 5c3 3 3 7 0 10M18 2.500c4.500 4.500 4.500 10.500 0 15" fill="none" stroke="#222" stroke-width="1.300"/></svg>
    <svg class="y5" viewBox="0 0 20 20"><rect x="1.500" y="6" width="16" height="11.500" rx="2.500" fill="none" stroke="#111" stroke-width="1.300"/><rect x="3.500" y="8" width="12" height="7.500" rx="1" fill="#111"/><path d="M19 9.500v4" stroke="#111" stroke-width="2"/><path d="M4 0L0 7h3L2 12l5-7H4.500L6 0z" fill="#111" stroke="#d9dbe2" stroke-width=".6"/></svg>
    <div class="time"><span>02:01</span><span>12-11-2023</span></div>
    <svg class="y6" viewBox="0 0 18 20"><path d="M9 0c5 0 7 3 7 7v5l2 4H0l2-4V7c0-4 2-7 7-7zM6 17h6c0 4-6 4-6 0z" fill="#0a45a0"/></svg>
  </div>
</footer>
<script src="chart.js"></script>
</body>
</html>
```
FILE: styles.css
```css
* { box-sizing: border-box; }
html, body { margin: 0; width: 1920px; height: 1080px; overflow: hidden; }
body { font-family: "Open Sans", "Noto Sans", sans-serif; font-size: 15px; color: #323130; background: #fff; display: flex; flex-direction: column; letter-spacing: -0.3px; }
svg { display: block; flex: none; }
i { display: block; flex: none; }
span { white-space: nowrap; }
.defs { position: absolute; width: 0; height: 0; }

/* browser tabs */
.tabstrip { height: 38px; flex: none; background: #d4d8db; display: flex; }
.tab { height: 29px; margin-top: 9px; border-right: 1px solid #b4b8bb; flex: none; display: flex; align-items: flex-start; color: #73777b; overflow: hidden; }
.fav { width: 20px; height: 20px; }
.t1 { width: 45px; padding-left: 15px; }
.t2 { width: 39px; padding-left: 9px; }
.t3 { width: 38px; padding-left: 9px; }
.t4 { width: 39px; padding-left: 9px; }
.t5 { width: 39px; padding-left: 9px; }
.t6 { width: 39px; padding-left: 10px; }
.t7 { width: 38px; padding-left: 9px; }
.wide { width: 100.4px; padding-left: 9px; }
.wide span { font-size: 14.500px; line-height: 20px; margin-left: 10px; width: 58px; overflow: hidden; letter-spacing: -0.6px; -webkit-mask-image: linear-gradient(90deg, #000 60%, transparent); mask-image: linear-gradient(90deg, #000 60%, transparent); }
.w1 { width: 102px; }
.w2 { width: 100px; border: 0; }
.w3 { width: 103px; padding-left: 10px; }
.wide.active { width: 102px; height: 38px; margin: 0; padding: 9px 0 0 10px; border: 0; border-radius: 6px 6px 0 0; background: #f2f2f2; color: #333; }
.wide.active span { width: 29px; letter-spacing: 0; }
.close { width: 11px; height: 11px; margin: 5px 0 0 13px; }
.newtab { width: 15px; height: 15px; margin: 11px 0 0 19px; }
.wincontrols { margin: 12px 0 0 91px; display: flex; gap: 43px; color: #222; }
.wincontrols svg { width: 14px; height: 14px; }

/* address bar */
.toolbar { height: 46px; flex: none; background: #f2f2f2; border-bottom: 1px solid #d0d0d0; display: flex; align-items: center; padding-left: 17px; }
.tb { width: 20px; height: 20px; margin-right: 20px; flex: none; }
.mark { margin: 0 18px 0 166px; }
.url { width: 1163px; height: 35px; background: #fff; border-radius: 5px; display: flex; align-items: center; padding-left: 13px; flex: none; font-size: 17px; color: #666; }
.warn { width: 18px; height: 16px; margin-right: 12px; }
.ns { width: 94px; letter-spacing: -0.25px; }
.vbar { width: 1px; height: 20px; background: #999; margin-right: 11px; }
.addr { letter-spacing: -0.3px; }
.addr b { font-weight: 400; color: #222; }
.urlicons { margin-left: auto; display: flex; align-items: center; padding-right: 12px; }
.urlicons svg { width: 20px; height: 20px; margin-right: 20px; }
.vbar2 { width: 1px; height: 19px; background: #bbb; margin: 0 14px 0 -6px; }
.urlicons .br { width: 20px; height: 23px; margin-right: 21px; }
.urlicons .bat { width: 22px; height: 20px; margin: 0; }
.fox { margin-left: 118px; width: 21px; margin-right: 19px; }
.wal { margin-left: 8px; margin-right: 25px; }
.vpn { width: 74px; height: 33px; border: 1px solid #dcdcdc; border-radius: 17px; display: flex; align-items: center; padding-left: 12px; gap: 6px; color: #333; font-size: 14.500px; flex: none; }
.vpn svg { width: 12px; height: 12px; }
.menu { margin: 0 0 0 13px; }

/* page frame */
.page { height: 916px; flex: none; display: flex; overflow: hidden; }
.side { width: 63px; flex: none; padding: 29px 0 0 18px; }
.side svg { width: 23px; height: 23px; margin-left: 2px; }
.side .s1 { width: 27px; height: 28px; margin: 0 0 24px; }
.side .s2 { margin-bottom: 22px; }
.side .s3 { margin-bottom: 30px; }
.side .s4 { margin-bottom: 550px; }
.side .s5 { margin-bottom: 30px; }
.side .s6 { margin-bottom: 30px; }
.main { width: 1834px; flex: none; background: #f1f1f1; overflow: hidden; }
.head { height: 72px; background: #fff; display: flex; align-items: center; justify-content: space-between; padding: 0 22px 0 36px; }
h1 { margin: 1px 0 0; font-size: 25.500px; font-weight: 700; letter-spacing: -0.35px; color: #201f1e; }
.tools { display: flex; align-items: center; }
.ibox { width: 40px; height: 40px; border-radius: 6px; background: #f8fafc; display: flex; align-items: center; justify-content: center; }
.ibox svg { width: 29px; height: 29px; }
.hsep { width: 2px; height: 25px; background: #e0e6ee; }
.a { margin: 0 30px 0 29px; }
.c, .d { margin-left: 18.500px; }
.e { margin: 0 29px; }
.f { margin: 0 29px; }
.btn { font-family: inherit; font-size: 15px; font-weight: 600; letter-spacing: -0.2px; color: #323130; background: #fff; border: 1px solid #8a8886; border-radius: 2px; height: 36px; display: flex; align-items: center; justify-content: center; padding: 1px 0 0; white-space: nowrap; flex: none; }
.refresh { width: 100px; padding: 0; }
.auto { width: 158px; height: 40px; background: #f8fafc; display: flex; align-items: center; padding-left: 10px; }
.clock { width: 20px; height: 20px; }
.auto sup { font-size: 13px; line-height: 13px; width: 14px; margin: -24px -6px 0 -8px; letter-spacing: -0.2px; }
.auto sup + span { margin-left: 8px; width: 95px; letter-spacing: -0.1px; }
.cv { width: 14px; height: 14px; }

.card { width: 1792px; margin-left: 21px; background: #fff; }
.chartcard { margin-top: 23px; height: 562px; }
.pivot { display: flex; height: 49px; }
.pv { display: flex; align-items: center; font-size: 17.500px; letter-spacing: 0; font-weight: 500; color: #272625; }
.pv span { padding-bottom: 2px; }
.pv svg { height: 26px; width: 26px; }
.p1 { width: 184px; padding-left: 13px; gap: 13px; }
.p2 { width: 207px; padding-left: 13px; gap: 13px; letter-spacing: -0.12px; }
.p3 { width: 137px; padding-left: 15px; gap: 14px; background: #999; }
.pv.p3 svg, .pv.p4 svg { width: 23px; height: 24px; }
.p4 { padding-left: 17px; gap: 14px; letter-spacing: -0.08px; }
.chart { width: 1792px; height: 513px; }
.chart text { font-size: 14.500px; fill: #6e7079; letter-spacing: -0.2px; }
.bar { fill: #3c8dbc; }
.grid { stroke: #e0e6f1; }
.axis { stroke: #6e7079; }

/* job table */
.jobs { margin-top: 11px; height: 260px; padding: 0 36px; }
.jobtitle { display: flex; align-items: center; height: 54px; gap: 25px; }
.jobtitle svg { width: 27px; height: 18px; margin-top: -2px; }
h2 { margin: 0; font-size: 19px; font-weight: 500; letter-spacing: 0.15px; color: #272625; }
.actions { display: flex; padding: 6px 34px 0; height: 66px; }
.filter { width: 106px; gap: 10px; }
.filter svg, .tens svg { width: 14px; height: 14px; margin-top: -2px; }
.searchbox { width: 450px; height: 36px; border: 1px solid #605e5c; border-radius: 2px; display: flex; align-items: center; padding: 1px 0 0 13px; gap: 7px; color: #605e5c; letter-spacing: -0.2px; }
.searchbox svg { width: 20px; height: 20px; margin-top: -2px; }
.primary { width: 94px; background: #0078d7; color: #fff; border-color: #0078d7; }
.addrem { width: 205px; margin-left: auto; letter-spacing: -0.1px; }
.dis { background: #f3f2f1; border-color: #f3f2f1; color: #a19f9d; }
.cmp { width: 112px; margin: 0 11px; }
.tens { width: 170px; justify-content: flex-start; padding-left: 22px; }
.tens span { width: 111px; text-align: left; }
.tens i { width: 1px; height: 18px; background: #c8c6c4; margin-right: 10px; }
.row { display: grid; grid-template-columns: 103.500px 304px 326.500px 311px 208.600px 224.400px 242px; height: 37px; align-items: center; border-bottom: 1px solid #e6e6e6; font-size: 13.500px; letter-spacing: -0.37px; color: #605e5c; }
.row > span { padding-top: 1px; }
.row.hd { height: 44px; padding-bottom: 8px; font-size: 15px; font-weight: 500; color: #272625; letter-spacing: 0.1px; }
.exp { width: 16px; height: 16px; margin-left: 57.500px; transform: rotate(-90deg); }
.id { display: flex; align-items: center; gap: 7px; }
.id svg { width: 16px; height: 16px; }
.row .ok { color: #1fc3a5; letter-spacing: -0.5px; }
.ops { display: flex; gap: 11px; padding-left: 0.500px; }
.ops b { width: 50px; height: 29px; border-radius: 2px; background: #0078d7; color: #fff; display: flex; align-items: center; justify-content: center; }
.ops svg { width: 16px; height: 16px; }
.ops .off { background: #f3f2f1; }

/* scroll bars */
.vscroll { width: 21px; margin-left: 2px; background: #f1f1f1; flex: none; display: flex; flex-direction: column; align-items: center; }
.up { border: 5px solid transparent; border-top: 0; border-bottom: 5px solid #a0a0a0; margin: 9px 0 7px; }
.vthumb { width: 17px; height: 483px; background: #c1c1c1; }
.down { border: 5px solid transparent; border-bottom: 0; border-top: 5px solid #505050; margin-top: auto; margin-bottom: 9px; }
.hscroll { height: 20px; flex: none; background: #f1f1f1; display: flex; align-items: center; }
.left { border: 5px solid transparent; border-left: 0; border-right: 5px solid #505050; margin: 0 10px 0 8px; }
.hthumb { width: 1855px; height: 17px; background: #c0c0c0; margin-top: 1px; }
.right { border: 5px solid transparent; border-right: 0; border-left: 5px solid #a0a0a0; margin: 0 8px 0 8px; }
.corner { width: 21px; height: 20px; background: #dcdcdc; }

/* taskbar */
.taskbar { height: 60px; flex: none; border-top: 1px solid #aeb0b6; background: linear-gradient(90deg, #cfdee8 0, #d9dce4 10%, #d6dbe4 40%, #dadbe1 60%, #d8dce2 78%, #dbdbe1 100%); display: flex; align-items: center; font-size: 14.500px; letter-spacing: -0.1px; color: #222; }
.weather { width: 30px; height: 30px; margin: -4px 0 0 25px; }
.wtext { display: flex; flex-direction: column; line-height: 20px; margin: -2px 0 0 9px; width: 438px; }
.dim { color: #555; letter-spacing: -0.05px; }
.start { width: 29px; height: 29px; margin-right: 18px; }
.tsearch { width: 273px; height: 39px; border: 1px solid #c3c6ce; border-radius: 20px; background: #f4f5f8; display: flex; align-items: center; padding-left: 13px; font-size: 16.500px; color: #555; flex: none; }
.tsearch svg { width: 19px; height: 19px; margin-right: 12px; }
.tsearch .illus { width: 57px; height: 31px; margin: 0 6px 0 auto; }
.apps { display: flex; margin-left: 3px; }
.apps div { width: 55px; height: 59px; display: flex; align-items: center; justify-content: center; position: relative; }
.apps svg { width: 30px; height: 30px; }
.apps .tile { width: 44px; height: 49px; margin: 5px 5.500px; background: #eceef3; border: 1px solid #cfd1d8; border-radius: 5px; box-shadow: 3px 0 0 #e4e5eb; }
.apps i { position: absolute; bottom: 5px; left: 24px; width: 8px; height: 4px; border-radius: 2px; background: #808187; }
.apps .on { left: 12px; bottom: 0; width: 20px; background: #0078d4; }
.tray { margin-left: auto; display: flex; align-items: center; padding-right: 26px; }
.y1 { width: 15px; height: 15px; margin-right: 22px; }
.y2 { width: 20px; height: 18px; margin-right: 23px; }
.lang, .time { display: flex; flex-direction: column; line-height: 20px; margin-top: -1px; }
.lang { width: 30px; align-items: center; margin-right: 22px; }
.y3 { width: 20px; height: 20px; margin-right: 10px; }
.y4 { width: 22px; height: 20px; margin-right: 8px; }
.y5 { width: 20px; height: 20px; }
.time { width: 98px; align-items: flex-end; margin-right: 10px; letter-spacing: 0.2px; }
.y6 { width: 18px; height: 20px; }
```
FILE: chart.js
```js
// Trial durations in seconds, trial 0 first.
const durations = [
  98.88, 101.66, 99.98, 96.27, 100.39, 90.94, 99.96, 108.70, 93.61, 99.13, 92.34, 86.95, 105.89, 94.49, 89.04, 94.16,
  100.42, 91.49, 86.46, 92.86, 91.71, 91.49, 82.23, 82.91, 101.55, 101.33, 102.18, 93.61, 95.09, 102.48, 94.32, 91.65,
  104.11, 99.60, 102.41, 92.35, 92.74, 103.72, 95.40, 95.89, 94.79, 94.87, 100.20, 107.64, 104.87, 104.64, 103.72, 109.10,
  106.05, 106.10, 109.74, 101.71, 102.64, 93.56, 97.41, 117.88, 110.10, 105.59, 99.89, 101.79, 96.64, 112.80, 111.49, 107.82
];
const x0 = 179, xScale = 12.994, yBase = 671.8, band = 5.61;
const yTop = yBase - band * durations.length;
const parts = [];
const text = (x, y, anchor, s) => parts.push(`<text x="${x}" y="${y}" text-anchor="${anchor}">${s}</text>`);
const line = (cls, a, b, c, d) => parts.push(`<line class="${cls}" x1="${a}" y1="${b}" x2="${c}" y2="${d}"/>`);

for (let v = 0; v <= 120; v += 20) {
  const x = Math.floor(x0 + v * xScale) + 0.5;
  if (v) line("grid", x, yTop, x, yBase);
  text(x - 0.5, 690.5, "middle", v);
}
durations.forEach((d, i) => {
  parts.push(`<rect class="bar" x="${x0}" y="${yBase - band * (i + 1) + 0.85}" width="${d * xScale}" height="3.9"/>`);
});
line("axis", x0, yTop, x0, yBase);
for (let i = 0; i <= 64; i += 4) {
  const y = Math.round((yBase - band * i + 0.3) * 2) / 2;
  line("axis", 173, y, x0, y);
  if (i < 64) text(170, yBase - band * (i + 0.5) + 4, "end", i);
}
text(195.5, 292, "middle", "Trial");
text(1755, 676, "start", "Time");
document.getElementById("chart").innerHTML = parts.join("");
```
